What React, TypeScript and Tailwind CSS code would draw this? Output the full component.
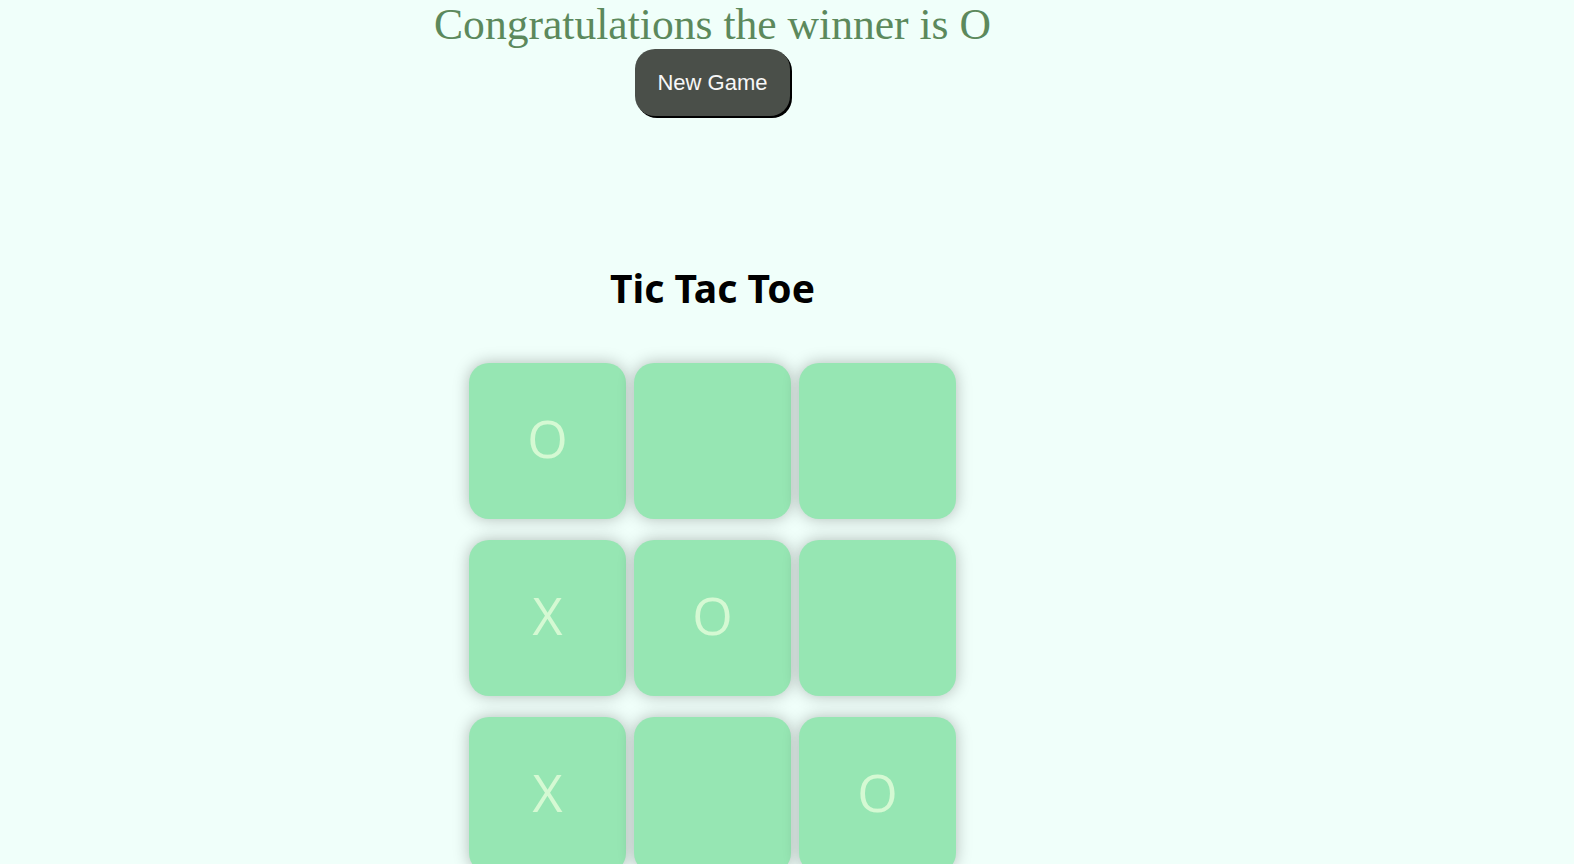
const board = ['O', '', '', 'X', 'O', '', 'X', '', 'O'];

function Cell({ value }: { value: string }) {
  return (
    <div className="flex h-[156px] w-[157px] items-center justify-center rounded-[20px] bg-[#96e6b3] pb-[6px] shadow-[0_0_16px_rgba(0,0,0,0.27)]">
      <span className="font-['Open_Sans',sans-serif] text-[52px] leading-none text-[#d5f9d3]">
        {value}
      </span>
    </div>
  );
}

export default function App() {
  return (
    <div className="min-h-screen bg-[#f0fffa]">
      <div className="flex w-[1425px] flex-col items-center">
        <div className="font-['Liberation_Serif',serif] text-[43.6px] leading-[49px] text-[#5c895c]">
          Congratulations the winner is O
        </div>
        <button className="rounded-[20px] bg-[#4a4f49] px-[22px] py-[21px] font-['Liberation_Sans',sans-serif] text-[22px] leading-[25px] text-[#f7f7f7] shadow-[2px_2px_0_#000]">
          New Game
        </button>

        <h1 className="mt-[152px] font-['Noto_Sans',sans-serif] text-[39px] font-bold leading-[40px] text-black">
          Tic Tac Toe
        </h1>

        <div className="mt-[55px] grid grid-cols-[157px_157px_157px] gap-x-2 gap-y-[21px]">
          {board.map((v, i) => (
            <Cell key={i} value={v} />
          ))}
        </div>
      </div>
    </div>
  );
}
